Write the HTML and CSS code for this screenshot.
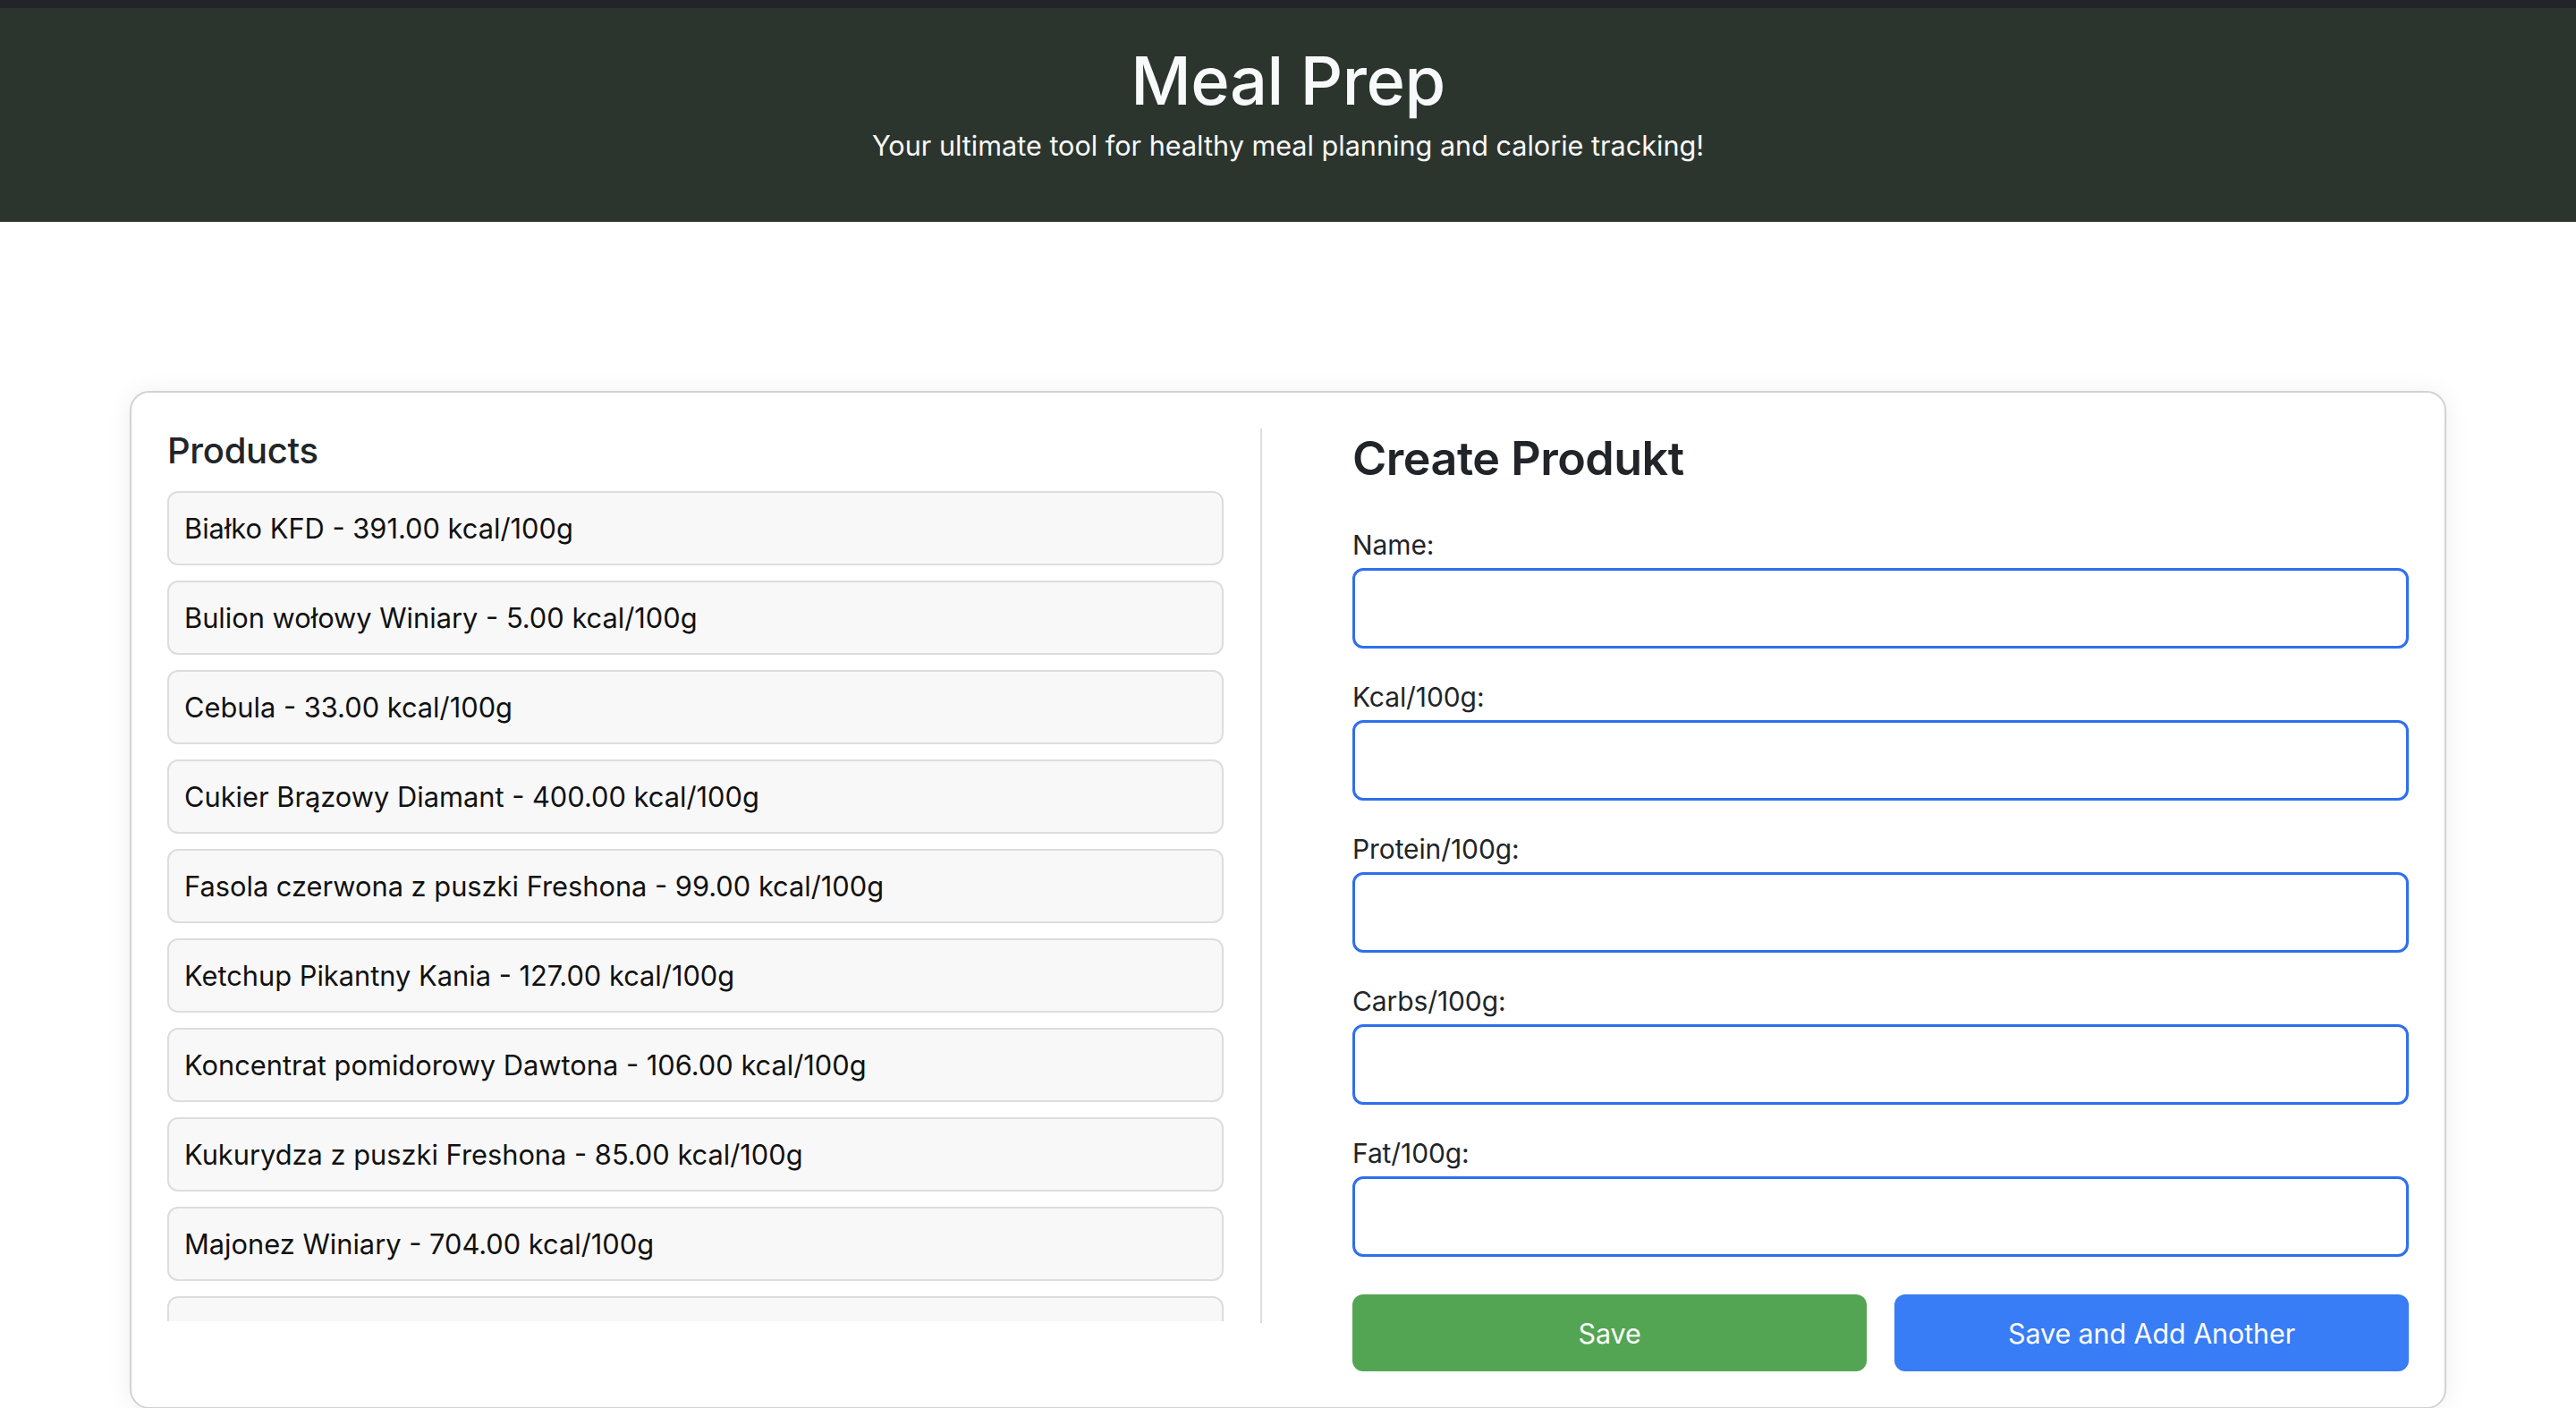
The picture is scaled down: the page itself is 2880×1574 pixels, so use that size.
FILE: index.html
```html
<!DOCTYPE html>
<html lang="pl">
<head>
<meta charset="utf-8">
<title>Meal Prep</title>
<link rel="stylesheet" href="styles.css">
</head>
<body>
<header class="hero">
  <h1 class="hero-title">Meal Prep</h1>
  <p class="hero-sub">Your ultimate tool for healthy meal planning and calorie tracking!</p>
</header>
<main class="main">
  <section class="card">
    <div class="col-list">
      <h2 class="list-title">Products</h2>
      <ul class="product-list">
        <li class="product">Białko KFD - 391.00 kcal/100g</li>
        <li class="product">Bulion wołowy Winiary - 5.00 kcal/100g</li>
        <li class="product">Cebula - 33.00 kcal/100g</li>
        <li class="product">Cukier Brązowy Diamant - 400.00 kcal/100g</li>
        <li class="product">Fasola czerwona z puszki Freshona - 99.00 kcal/100g</li>
        <li class="product">Ketchup Pikantny Kania - 127.00 kcal/100g</li>
        <li class="product">Koncentrat pomidorowy Dawtona - 106.00 kcal/100g</li>
        <li class="product">Kukurydza z puszki Freshona - 85.00 kcal/100g</li>
        <li class="product">Majonez Winiary - 704.00 kcal/100g</li>
        <li class="product">Makaron Lubella - 350.00 kcal/100g</li>
      </ul>
    </div>
    <div class="col-form">
      <h2 class="form-title">Create Produkt</h2>
      <form class="form">
        <div class="field">
          <label class="label" for="name">Name:</label>
          <input class="input" id="name" type="text">
        </div>
        <div class="field">
          <label class="label" for="kcal">Kcal/100g:</label>
          <input class="input" id="kcal" type="text">
        </div>
        <div class="field">
          <label class="label" for="protein">Protein/100g:</label>
          <input class="input" id="protein" type="text">
        </div>
        <div class="field">
          <label class="label" for="carbs">Carbs/100g:</label>
          <input class="input" id="carbs" type="text">
        </div>
        <div class="field">
          <label class="label" for="fat">Fat/100g:</label>
          <input class="input" id="fat" type="text">
        </div>
        <div class="buttons">
          <button class="btn btn-save" type="button">Save</button>
          <button class="btn btn-another" type="button">Save and Add Another</button>
        </div>
      </form>
    </div>
  </section>
</main>
</body>
</html>
```
FILE: styles.css
```css
* {
  box-sizing: border-box;
}

html, body {
  margin: 0;
  padding: 0;
  background: #ffffff;
}

body {
  font-family: Inter, "Noto Sans", "Liberation Sans", sans-serif;
  color: #212529;
  overflow: hidden;
}

.hero {
  background: #2c352d;
  border-top: 9px solid #212529;
  padding: 38px 0 63px;
  text-align: center;
  color: #f8f9fa;
}

.hero-title {
  margin: 0;
  font-size: 74px;
  line-height: 86px;
  font-weight: 500;
  letter-spacing: -0.5px;
}

.hero-sub {
  margin: 7px 0 0;
  font-size: 30.6px;
  line-height: 45px;
  font-weight: 400;
}

.main {
  padding: 189px 145px 0;
}

.card {
  display: flex;
  align-items: flex-start;
  border: 2px solid #d2d2d2;
  border-radius: 22px;
  padding: 40px;
  background: #fff;
  box-shadow: 0 2px 28px rgba(0, 0, 0, 0.07);
}

.col-list {
  flex: 0 0 1224px;
  padding-right: 41px;
  border-right: 2px solid #dddddd;
  height: 1000px;
}

.list-title {
  margin: 0 0 20px;
  font-size: 40px;
  line-height: 50px;
  font-weight: 500;
  letter-spacing: -0.3px;
}

.product-list {
  list-style: none;
  margin: 0;
  padding: 0;
  height: 928px;
  overflow: hidden;
}

.product {
  background: #f8f8f8;
  border: 2px solid #dddddd;
  border-radius: 12px;
  padding: 17px 17px;
  font-size: 30.8px;
  line-height: 45px;
  color: #111;
  margin-bottom: 17px;
}

.col-form {
  flex: 1 1 auto;
  padding-left: 101px;
}

.form-title {
  margin: 0;
  font-size: 52px;
  line-height: 67px;
  font-weight: 600;
  letter-spacing: -0.5px;
}

.form {
  margin-top: 41px;
}

.field {
  margin-bottom: 32px;
}

.field:last-of-type {
  margin-bottom: 0;
}

.label {
  display: block;
  font-size: 30px;
  line-height: 45px;
  margin-bottom: 3px;
  letter-spacing: -0.1px;
}

.input {
  display: block;
  width: 100%;
  height: 90px;
  border: 3px solid #2f6fed;
  border-radius: 12px;
  background: #fff;
  font: inherit;
  outline: none;
}

.buttons {
  display: flex;
  gap: 31px;
  margin-top: 42px;
}

.btn {
  flex: 1 1 0;
  height: 86px;
  border: none;
  border-radius: 12px;
  color: #fff;
  font-family: inherit;
  font-size: 30.5px;
  font-weight: 400;
  letter-spacing: -0.1px;
}

.btn-save {
  background: #53a553;
}

.btn-another {
  background: #387cf6;
}
```
